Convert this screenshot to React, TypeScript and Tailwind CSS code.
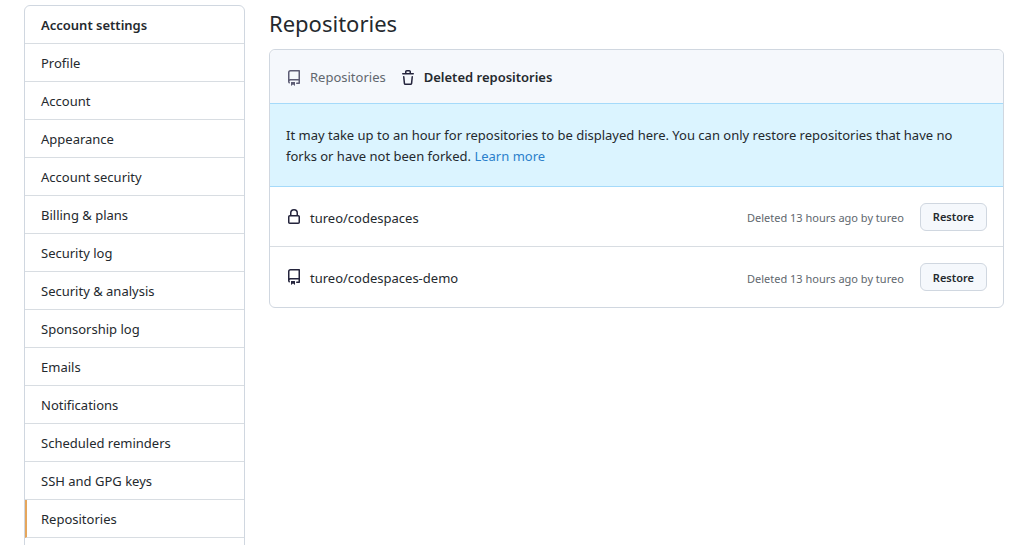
import React from "react";

const navItems = [
  "Profile",
  "Account",
  "Appearance",
  "Account security",
  "Billing & plans",
  "Security log",
  "Security & analysis",
  "Sponsorship log",
  "Emails",
  "Notifications",
  "Scheduled reminders",
  "SSH and GPG keys",
  "Repositories",
];

const repoPath =
  "M2 2.5A2.5 2.5 0 014.5 0h8.75a.75.75 0 01.75.75v12.5a.75.75 0 01-.75.75h-2.5a.75.75 0 110-1.5h1.75v-2h-8a1 1 0 00-.714 1.7.75.75 0 01-1.072 1.05A2.495 2.495 0 012 11.5v-9zm10.5-1V9h-8c-.356 0-.694.074-1 .208V2.5a1 1 0 011-1h8zM5 12.25v3.25a.25.25 0 00.4.2l1.45-1.087a.25.25 0 01.3 0L8.6 15.7a.25.25 0 00.4-.2v-3.25a.25.25 0 00-.25-.25h-3.5a.25.25 0 00-.25.25z";
const trashPath =
  "M6.5 1.75a.25.25 0 01.25-.25h2.5a.25.25 0 01.25.25V3h-3V1.75zm4.5 0V3h2.25a.75.75 0 010 1.5H2.75a.75.75 0 010-1.5H5V1.75C5 .784 5.784 0 6.75 0h2.5C10.216 0 11 .784 11 1.75zM4.496 6.675a.75.75 0 10-1.492.15l.66 6.6A1.75 1.75 0 005.405 15h5.19c.9 0 1.652-.681 1.741-1.576l.66-6.6a.75.75 0 00-1.492-.149l-.66 6.6a.25.25 0 01-.249.225h-5.19a.25.25 0 01-.249-.225l-.66-6.6z";
const lockPath =
  "M4 4v2h-.25A1.75 1.75 0 002 7.75v5.5c0 .966.784 1.75 1.75 1.75h8.5A1.75 1.75 0 0014 13.25v-5.5A1.75 1.75 0 0012.25 6H12V4a4 4 0 10-8 0zm6.5 2V4a2.5 2.5 0 10-5 0v2h5zM12 7.5h.25a.25.25 0 01.25.25v5.5a.25.25 0 01-.25.25h-8.5a.25.25 0 01-.25-.25v-5.5a.25.25 0 01.25-.25H12z";

function Icon({ path, className = "" }: { path: string; className?: string }) {
  return (
    <svg viewBox="0 0 16 16" aria-hidden="true" className={`size-4 shrink-0 fill-current ${className}`}>
      <path fillRule="evenodd" clipRule="evenodd" d={path} />
    </svg>
  );
}

const repos = [
  { name: "tureo/codespaces", icon: lockPath },
  { name: "tureo/codespaces-demo", icon: repoPath },
];

export default function App() {
  return (
    <div className="flex h-screen items-start gap-6 overflow-hidden bg-white pt-[5px] pr-3.5 pl-6 font-['Noto_Sans','Open_Sans',sans-serif] text-[13px] text-[#24292e]">
      <nav aria-label="Account settings" className="w-[221px] shrink-0 rounded-md border border-[#d0d7e0] pb-10">
        <h2 className="flex h-[38px] items-center border-b border-[#d8dde2] px-4 pt-0.5 font-semibold">
          Account settings
        </h2>
        {navItems.map((item) => (
          <a
            key={item}
            href="#"
            aria-current={item === "Repositories" ? "page" : undefined}
            className="flex h-[38px] items-center border-b border-[#d8dde2] px-4 pt-0.5 aria-[current=page]:border-l-2 aria-[current=page]:border-l-[#e5a65c] aria-[current=page]:pl-3.5"
          >
            {item}
          </a>
        ))}
      </nav>
      <main className="min-w-0 flex-1">
        <h1 className="pt-0.5 text-[22px] leading-8">Repositories</h1>
        <section className="mt-2.5 rounded-md border border-[#d0d7e0]">
          <div className="flex h-[53px] items-center gap-3.5 rounded-t-md bg-[#f5f8fc] px-4 pt-0.5">
            <a href="#" className="flex items-center gap-2 text-[#61676e]">
              <Icon path={repoPath} className="text-[#5c5c74]" />
              Repositories
            </a>
            <a href="#" aria-current="page" className="flex items-center gap-2 font-semibold">
              <Icon path={trashPath} className="text-[#24243c]" />
              Deleted repositories
            </a>
          </div>
          <p className="border-y border-[#a5dafa] bg-[#dbf4ff] pt-[21px] pr-8 pb-[19px] pl-4 leading-[21px]">
            It may take up to an hour for repositories to be displayed here. You can only restore repositories that
            have no forks or have not been forked.{" "}
            <a href="#" className="text-[#2a7fcb]">
              Learn more
            </a>
          </p>
          <ul>
            {repos.map((repo) => (
              <li key={repo.name} className="flex h-15 items-center border-b border-[#d8dde2] px-4 last:border-b-0">
                <Icon path={repo.icon} className="mr-2 text-[#24243c]" />
                <span className="flex-1 pt-1">{repo.name}</span>
                <span className="mr-4 pt-1 text-[11px] text-[#61676e]">Deleted 13 hours ago by tureo</span>
                <button type="button" className="h-7 rounded-md border border-[#d0d7e0] bg-[#f5f8fc] px-3 pt-0.5 text-[11px] font-semibold">
                  Restore
                </button>
              </li>
            ))}
          </ul>
        </section>
      </main>
    </div>
  );
}
